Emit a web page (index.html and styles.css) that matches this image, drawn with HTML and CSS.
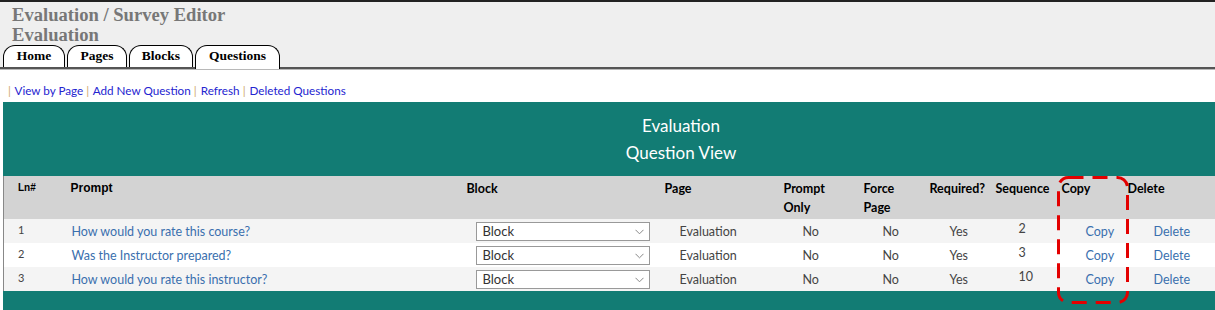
FILE: index.html
```html
<!DOCTYPE html>
<html lang="en">
<head>
    <meta charset="UTF-8">
    <meta name="viewport" content="width=device-width, initial-scale=1.0">
    <title>Evaluation / Survey Editor</title>
    <link rel="stylesheet" href="styles.css">
</head>
<body>
    <div class="banner">
        <h1>Evaluation / Survey Editor<br>Evaluation</h1>
        <ul class="tabs">
            <li><a href="#">Home</a></li>
            <li><a href="#">Pages</a></li>
            <li><a href="#">Blocks</a></li>
            <li class="active"><a href="#">Questions</a></li>
        </ul>
    </div>

    <div class="toolbar">
        <span class="sep">|</span> <a href="#">View by Page</a>
        <span class="sep">|</span> <a href="#">Add New Question</a>
        <span class="sep">|</span> <a href="#">Refresh</a>
        <span class="sep">|</span> <a href="#">Deleted Questions</a>
    </div>

    <div class="panel">
        <div class="panel-title">Evaluation<br>Question View</div>
        <table class="questions">
            <colgroup>
                <col style="width:53px">
                <col style="width:396px">
                <col style="width:198px">
                <col style="width:119px">
                <col style="width:80px">
                <col style="width:66px">
                <col style="width:66px">
                <col style="width:66px">
                <col style="width:66px">
                <col>
            </colgroup>
            <thead>
                <tr>
                    <th class="small">Ln#</th>
                    <th class="arial">Prompt</th>
                    <th>Block</th>
                    <th>Page</th>
                    <th>Prompt<br>Only</th>
                    <th>Force<br>Page</th>
                    <th>Required?</th>
                    <th>Sequence</th>
                    <th>Copy</th>
                    <th>Delete</th>
                </tr>
            </thead>
            <tbody id="question-list"></tbody>
        </table>
        <div class="panel-foot"></div>

        <!-- red dashed marker round the Copy column -->
        <svg class="highlight" width="72" height="128" viewBox="0 0 72 128">
            <rect x="1.5" y="1.5" width="69" height="125" rx="10" ry="10"
                  fill="none" stroke="#e30000" stroke-width="3" stroke-dasharray="15 9"/>
        </svg>
    </div>

    <script>
        // Questions for this evaluation
        const questions = [
            { prompt: "How would you rate this course?", seq: 2 },
            { prompt: "Was the Instructor prepared?", seq: 3 },
            { prompt: "How would you rate this instructor?", seq: 10 }
        ];
        const list = document.getElementById("question-list");

        questions.forEach((q, i) => {
            const row = document.createElement("tr");
            row.innerHTML = `
                <td class="ln">${i + 1}</td>
                <td><a href="#">${q.prompt}</a></td>
                <td>
                    <span class="select-wrap">
                        <select><option>Block</option></select>
                        <svg class="chevron" width="9" height="6" viewBox="0 0 9 6">
                            <path d="M0.5 0.8 L4.5 4.8 L8.5 0.8" fill="none" stroke="#888" stroke-width="1"/>
                        </svg>
                    </span>
                </td>
                <td>Evaluation</td>
                <td>No</td>
                <td>No</td>
                <td>Yes</td>
                <td class="seq">${q.seq}</td>
                <td><a href="#">Copy</a></td>
                <td><a href="#">Delete</a></td>
            `;
            list.appendChild(row);
        });
    </script>
</body>
</html>
```

FILE: styles.css
```css
body {
    margin: 0;
    font-family: "Source Sans Pro", Lato, sans-serif;
    font-size: 12.5px;
    background: #fff;
}

.banner {
    background-color: #efefef;
    border-top: 2px solid #222;
    border-bottom: 2px solid #555;
    box-shadow: 0 1px 0 #b8b8b8;
    padding: 0 0 0 3px;
}

.banner h1 {
    margin: 0;
    padding: 3px 0 0 9px;
    font-family: "Liberation Serif", serif;
    font-size: 18.6px;
    line-height: 20px;
    color: #777;
    height: 40px;
}

.tabs {
    list-style: none;
    margin: 0;
    padding: 0;
    display: flex;
    gap: 2px;
}

.tabs li a {
    display: block;
    background: #fff;
    border: 1px solid #000;
    border-bottom: none;
    border-radius: 12px 12px 0 0;
    font-family: "Liberation Serif", serif;
    font-weight: bold;
    font-size: 13.5px;
    color: #000;
    text-decoration: none;
    height: 21px;
    line-height: 19px;
    text-align: center;
}

.tabs li:nth-child(1) a { width: 60px; }
.tabs li:nth-child(2) a { width: 58px; }
.tabs li:nth-child(3) a { width: 62px; }
.tabs li:nth-child(4) a { width: 83px; }

.tabs li.active a {
    margin-bottom: -2px;
    height: 23px;
}

.toolbar {
    margin: 14px 0 0 8px;
    font-size: 11.7px;
}

.toolbar .sep {
    color: #d0a870;
    margin-right: 1px;
}

.toolbar a {
    color: #2424d0;
    text-decoration: none;
}

.panel {
    position: relative;
    margin: 5px 0 0 3px;
    background-color: #127c74;
}

.panel-title {
    color: #fff;
    text-align: center;
    font-size: 17px;
    line-height: 27px;
    padding: 10px 0 10px 144px;
}

.questions {
    width: 100%;
    border-collapse: collapse;
    table-layout: fixed;
    border-left: 1px solid #888;
}

.questions th {
    background-color: #d3d3d3;
    color: #000;
    text-align: left;
    vertical-align: top;
    font-weight: bold;
    font-size: 12.5px;
    line-height: 19px;
    padding: 3px 0 2px 14px;
    height: 38px;
    white-space: nowrap;
}

.questions th.small {
    font-family: "Liberation Sans", Arial, sans-serif;
    font-size: 10px;
    padding-top: 2px;
}

.questions th.arial {
    font-family: "Liberation Sans", Arial, sans-serif;
    font-size: 12px;
}

.questions td {
    height: 24px;
    padding: 0;
    color: #444;
    text-align: left;
    white-space: nowrap;
}

.questions td.ln {
    font-size: 11px;
    padding-left: 14px;
    vertical-align: top;
    padding-top: 4px;
    height: 20px;
}

.questions td:nth-child(2) { padding-left: 15px; }
.questions td:nth-child(3) { text-align: right; padding-right: 1px; }
.questions td:nth-child(4) { padding-left: 29px; }
.questions td:nth-child(5) { padding-left: 33px; }
.questions td:nth-child(6) { padding-left: 33px; }
.questions td:nth-child(7) { padding-left: 34px; }
.questions td:nth-child(8) { padding-left: 37px; }
.questions td:nth-child(9) { padding-left: 38px; }
.questions td:nth-child(10) { padding-left: 40px; }

.questions td.seq {
    font-size: 12.5px;
    vertical-align: top;
    padding-top: 2px;
    height: 22px;
}

.questions td a {
    color: #3a6fae;
    text-decoration: none;
}

.questions tbody tr:nth-child(odd) td {
    background-color: #f4f4f4;
}

.questions tbody tr:nth-child(even) td {
    background-color: #fff;
}

.select-wrap {
    position: relative;
    display: inline-block;
    vertical-align: middle;
}

.questions select {
    appearance: none;
    -webkit-appearance: none;
    display: block;
    width: 174px;
    height: 19px;
    font-family: inherit;
    font-size: 13px;
    color: #333;
    padding: 0 0 0 6px;
    border: 1px solid #999;
    border-radius: 0;
    background: #fff;
}

.chevron {
    position: absolute;
    right: 6px;
    top: 7px;
}

.panel-foot {
    height: 19px;
}

.highlight {
    position: absolute;
    left: 1054px;
    top: 74px;
}
```
